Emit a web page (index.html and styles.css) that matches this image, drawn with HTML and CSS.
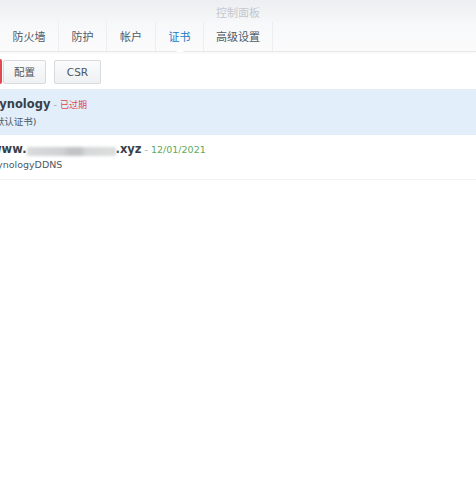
FILE: index.html
```html
<!DOCTYPE html>
<html lang="zh">
<head>
<meta charset="utf-8">
<link rel="stylesheet" href="styles.css">
</head>
<body>
<div class="window">
  <div class="titlebar"><span class="title">控制面板</span></div>
  <div class="tabs">
    <div class="tab">防火墙</div>
    <div class="tab">防护</div>
    <div class="tab">帐户</div>
    <div class="tab active">证书</div>
    <div class="tab">高级设置</div>
  </div>
  <div class="toolbar">
    <div class="btn-cut"></div>
    <button class="btn">配置</button>
    <button class="btn">CSR</button>
  </div>
  <div class="list">
    <div class="row selected">
      <div class="line1"><span class="name">Synology</span><span class="dash"> - </span><span class="expired">已过期</span></div>
      <div class="line2">(默认证书)</div>
    </div>
    <div class="row">
      <div class="line1"><span class="name">www.</span><span class="blur"></span><span class="name">.xyz</span><span class="dash"> - </span><span class="date">12/01/2021</span></div>
      <div class="line2">SynologyDDNS</div>
    </div>
  </div>
</div>
</body>
</html>
```
FILE: styles.css
```css
html, body {
  margin: 0;
  padding: 0;
  background: #ffffff;
}
body {
  width: 476px;
  height: 477px;
  overflow: hidden;
  font-family: "DejaVu Sans", "Noto Sans CJK SC", sans-serif;
  color: #404a56;
}
.window {
  display: flex;
  flex-direction: column;
}
.titlebar {
  height: 22px;
  display: flex;
  align-items: center;
  justify-content: center;
  background: linear-gradient(#eceef1, #f6f7f8);
}
.title {
  font-size: 11px;
  color: #c3c8cf;
  font-family: "Noto Sans CJK SC", sans-serif;
  margin-top: 1px;
}
.tabs {
  height: 29px;
  display: flex;
  align-items: stretch;
  background: linear-gradient(#f7f8f9, #fbfbfc);
  border-bottom: 1px solid #e6e9ec;
  box-shadow: 0 1px 2px rgba(0,0,0,0.04);
  position: relative;
}
.tab {
  position: relative;
  display: flex;
  align-items: center;
  justify-content: center;
  font-family: "Noto Sans CJK SC", sans-serif;
  font-size: 11px;
  color: #505a66;
  border-right: 1px solid #eceef1;
  padding-bottom: 1px;
}
.tab:nth-child(1) { width: 58px; }
.tab:nth-child(2) { width: 47px; }
.tab:nth-child(3) { width: 48px; }
.tab:nth-child(4) { width: 47px; }
.tab:nth-child(5) { width: 68px; }
.tab.active {
  color: #1b78c4;
}
.tab.active::after {
  content: "";
  position: absolute;
  left: 50%;
  bottom: -1px;
  margin-left: -4px;
  border-left: 4px solid transparent;
  border-right: 4px solid transparent;
  border-bottom: 4px solid #ffffff;
}
.toolbar {
  height: 37px;
  box-sizing: border-box;
  display: flex;
  align-items: center;
  gap: 8px;
  padding-top: 2px;
}
.btn-cut {
  width: 2px;
  height: 25px;
  margin-right: -7px;
  background: #e3474f;
  border-radius: 0 2px 2px 0;
}
.btn {
  height: 24px;
  padding: 0;
  border: 1px solid #d7dade;
  border-radius: 2px;
  background: linear-gradient(#fbfbfc, #eef0f2);
  font-family: "DejaVu Sans", "Noto Sans CJK SC", sans-serif;
  font-size: 10.5px;
  color: #4c5661;
}
.btn:nth-of-type(1) { width: 43px; }
.btn:nth-of-type(2) { width: 47px; }
.list {
  border-top: 1px solid #e6edf5;
}
.row {
  height: 45px;
  box-sizing: border-box;
  padding: 5px 0 0 0;
  margin-left: -9px;
  border-bottom: 1px solid #f0f2f4;
}
.row.selected {
  background: #e2eef9;
  border-bottom-color: #e2eef9;
}
.line1 {
  height: 18px;
  display: flex;
  align-items: center;
  white-space: nowrap;
}
.name {
  font-weight: bold;
  font-size: 11.5px;
  color: #383f49;
}
.dash {
  font-size: 9.5px;
  color: #9aa2ab;
  white-space: pre;
}
.expired {
  font-family: "Noto Sans CJK SC", sans-serif;
  font-size: 9px;
  color: #e0454d;
}
.date {
  font-size: 9.5px;
  color: #62aa58;
}
.blur {
  display: inline-block;
  width: 89px;
  height: 9px;
  margin-top: 4px;
  background: linear-gradient(90deg, #d9dadb 0%, #d0d1d2 40%, #c2c3c4 48%, #c2c3c4 60%, #d6d7d8 66%, #dcdddd 100%);
  filter: blur(1.5px);
}
.line2 {
  font-size: 9.5px;
  color: #4f5965;
  margin-top: 1px;
  white-space: nowrap;
}
```
